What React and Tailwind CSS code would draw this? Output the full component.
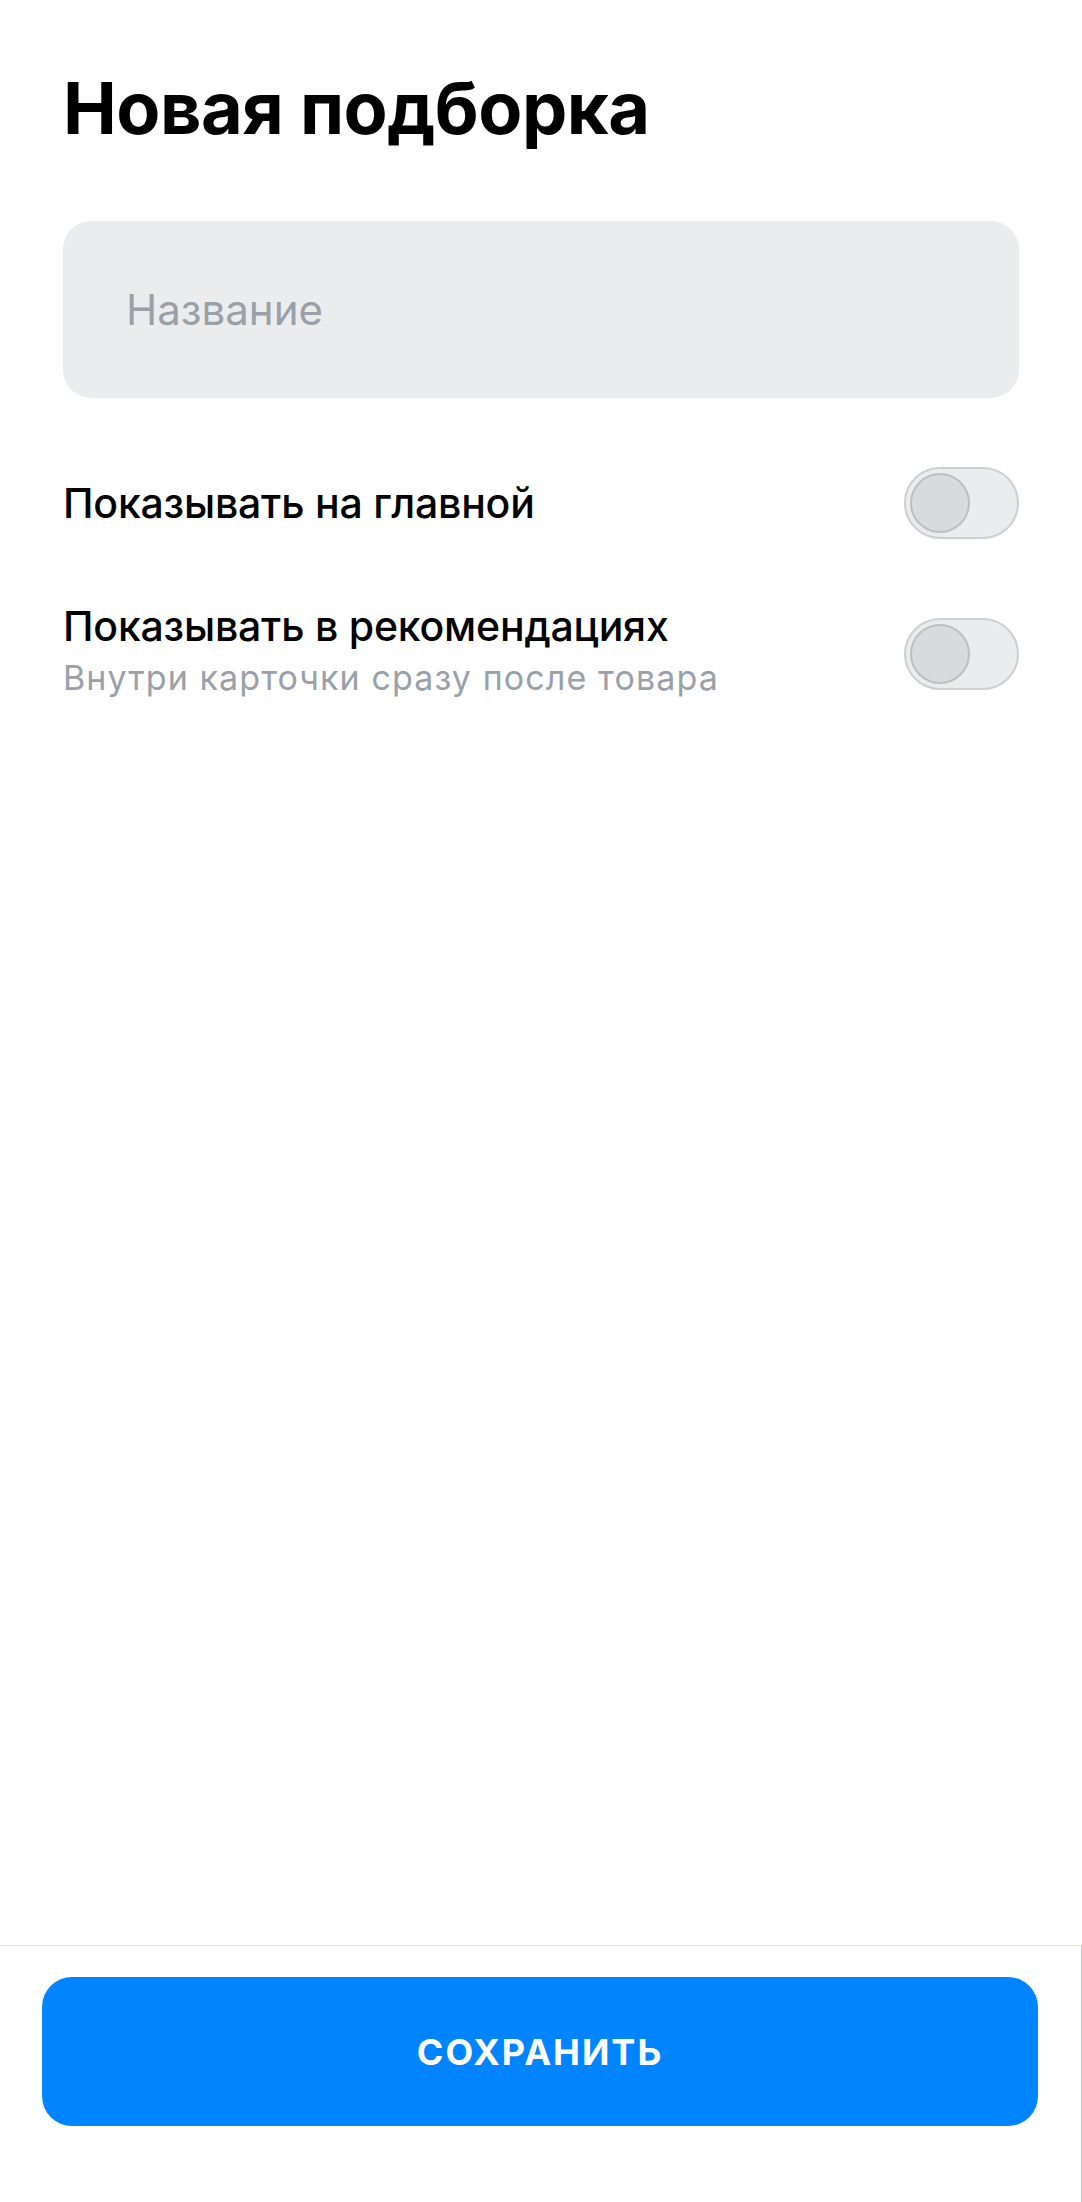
import React from "react";

function Toggle({ className = "" }) {
  return (
    <div
      className={`relative w-[115px] h-[72px] shrink-0 rounded-full bg-[#EBECEE] border-[2px] border-[#CDCFD3] ${className}`}
    >
      <div className="absolute left-[4px] top-[4px] w-[60px] h-[60px] rounded-full bg-[#D9DADE] border-[2px] border-[#BDBFC4]" />
    </div>
  );
}

export default function App() {
  return (
    <div
      className="w-[1082px] h-[2202px] flex flex-col bg-white"
      style={{ fontFamily: "Inter, 'Noto Sans', sans-serif" }}
    >
      <div className="flex-1 px-[63px] pt-[65px]">
        <h1 className="text-[72px] leading-[86px] font-bold text-black tracking-[-0.5px]">
          Новая подборка
        </h1>
        <div className="mt-[70px] h-[177px] rounded-[28px] bg-[#EBECEE] flex items-center px-[63px]">
          <span className="text-[42px] leading-[48px] text-[#9AA0A8]">Название</span>
        </div>
        <div className="mt-[69px] flex items-center justify-between">
          <span className="text-[41px] leading-[41px] font-medium text-black tracking-[-0.2px]">
            Показывать на главной
          </span>
          <Toggle />
        </div>
        <div className="mt-[67px] flex items-start justify-between">
          <div className="flex flex-col">
            <span className="text-[41px] leading-[41px] font-medium text-black tracking-[-0.2px]">
              Показывать в рекомендациях
            </span>
            <span className="mt-[13px] text-[34px] leading-[36px] text-[#9AA0A8] tracking-[1.1px]">
              Внутри карточки сразу после товара
            </span>
          </div>
          <Toggle className="mt-[12px]" />
        </div>
      </div>
      <div className="h-[257px] w-[1082px] border-t border-t-[#E4EAF0] border-r border-r-[#B9CBDD] px-[42px] pt-[31px]">
        <button className="w-[996px] h-[149px] rounded-[30px] bg-[#0084FF] text-white text-[36px] font-bold tracking-[2px] flex items-center justify-center">
          СОХРАНИТЬ
        </button>
      </div>
    </div>
  );
}
